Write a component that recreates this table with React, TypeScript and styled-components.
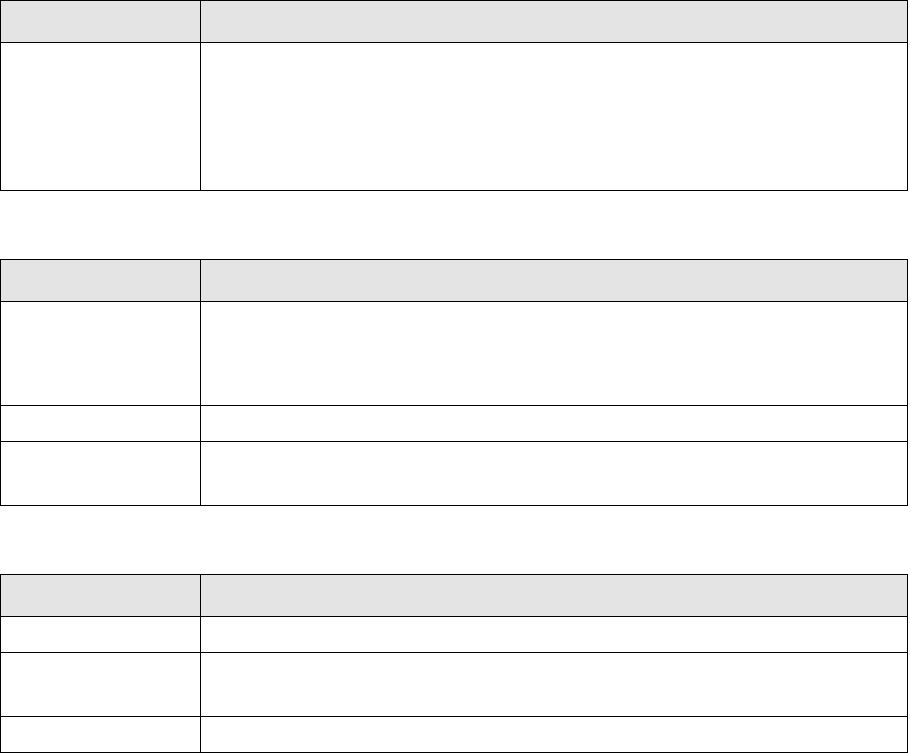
import React from "react";
import styled, { createGlobalStyle } from "styled-components";

const GlobalStyle = createGlobalStyle`
  html, body {
    margin: 0;
    padding: 0;
    background: #ffffff;
    font-family: "Liberation Sans", Arial, sans-serif;
  }
`;

const Page = styled.div`
  width: 908px;
  display: flex;
  flex-direction: column;
  gap: 68px;
`;

const Table = styled.table`
  width: 908px;
  border-collapse: collapse;
  table-layout: fixed;
  font-size: 14px;
  color: #000;
`;

const HeadCell = styled.th`
  height: 41px;
  padding: 0 8px;
  background: #e4e4e4;
  border: 1px solid #000;
  text-align: left;
  font-weight: bold;
`;

const Cell = styled.td<{ $h: number }>`
  height: ${(p) => p.$h}px;
  padding: 0 8px;
  border: 1px solid #000;
  vertical-align: top;
`;

const LabelCol = styled.col`
  width: 200px;
`;

type Props = { rows: number[] };

const InfoTable: React.FC<Props> = ({ rows }) => (
  <Table>
    <colgroup>
      <LabelCol />
      <col />
    </colgroup>
    <thead>
      <tr>
        <HeadCell />
        <HeadCell />
      </tr>
    </thead>
    <tbody>
      {rows.map((h, i) => (
        <tr key={i}>
          <Cell $h={h} />
          <Cell $h={h} />
        </tr>
      ))}
    </tbody>
  </Table>
);

const App: React.FC = () => (
  <>
    <GlobalStyle />
    <Page>
      <InfoTable rows={[147]} />
      <InfoTable rows={[103, 35, 63]} />
      <InfoTable rows={[35, 63, 35]} />
    </Page>
  </>
);

export default App;
